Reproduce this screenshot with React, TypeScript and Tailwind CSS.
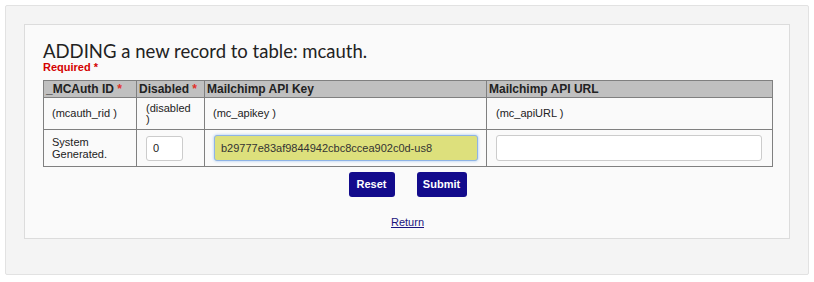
import React, { useState } from 'react'

const sans = { fontFamily: '"Liberation Sans", Arial, sans-serif' }

const Req: React.FC = () => <span className="text-[#e0302a]"> *</span>

export const App: React.FC = () => {
  const [disabled, setDisabled] = useState('0')
  const [apiKey, setApiKey] = useState('b29777e83af9844942cbc8ccea902c0d-us8')
  const [apiUrl, setApiUrl] = useState('')

  return (
    <div className="w-[814px] h-[282px] bg-white p-[5px]" style={sans}>
      <div className="w-[804px] h-[270px] border border-[#e2e2e2] bg-[#f4f4f4] rounded-[2px] p-[18px]">
        <div className="w-[766px] h-[215px] border border-[#dcdcdc] bg-[#fafafa] px-[18px] pt-[16px]">
          {/* Heading */}
          <h1
            className="text-[18.5px] leading-[20px] text-[#222] font-normal"
            style={{ fontFamily: 'Lato, "Open Sans", sans-serif' }}
          >
            ADDING a new record to table: mcauth.
          </h1>
          <div className="text-[11px] leading-[13px] font-bold text-[#d40000]">Required *</div>

          {/* Record table */}
          <table className="mt-[6px] w-[729px] border-collapse border border-[#808080] text-[11px] text-[#222] table-fixed">
            <colgroup>
              <col className="w-[93px]" />
              <col className="w-[68px]" />
              <col className="w-[282px]" />
              <col className="w-[286px]" />
            </colgroup>
            <thead>
              <tr className="h-[17px] bg-[#c0c0c0]">
                <th className="border border-[#808080] text-left font-bold text-[12px] leading-[14px] px-[2px] py-0">
                  _MCAuth ID<Req />
                </th>
                <th className="border border-[#808080] text-left font-bold text-[12px] leading-[14px] px-[2px] py-0">
                  Disabled<Req />
                </th>
                <th className="border border-[#808080] text-left font-bold text-[12px] leading-[14px] px-[2px] py-0">
                  Mailchimp API Key
                </th>
                <th className="border border-[#808080] text-left font-bold text-[12px] leading-[14px] px-[2px] py-0">
                  Mailchimp API URL
                </th>
              </tr>
            </thead>
            <tbody>
              <tr className="h-[32px]">
                <td className="border border-[#808080] px-[8px] align-middle leading-[11px]">(mcauth_rid )</td>
                <td className="border border-[#808080] px-[9px] align-middle leading-[11px]">(disabled )</td>
                <td className="border border-[#808080] px-[8px] align-middle leading-[11px]">(mc_apikey )</td>
                <td className="border border-[#808080] px-[9px] align-middle leading-[11px]">(mc_apiURL )</td>
              </tr>
              <tr className="h-[37px]">
                <td className="border border-[#808080] px-[8px] align-middle leading-[12px]">
                  System
                  <br />
                  Generated.
                </td>
                <td className="border border-[#808080] px-[9px] align-middle">
                  <input
                    value={disabled}
                    onChange={(e) => setDisabled(e.target.value)}
                    className="w-[37px] h-[25px] border border-[#cccccc] rounded-[3px] bg-white px-[6px] text-[11px] text-[#222] outline-none"
                    style={sans}
                  />
                </td>
                <td className="border border-[#808080] px-[9px] align-middle">
                  <input
                    value={apiKey}
                    onChange={(e) => setApiKey(e.target.value)}
                    className="w-[264px] h-[26px] border border-[#8fb4e6] rounded-[3px] bg-[#dde07c] px-[6px] text-[11px] text-[#333] outline-none shadow-[0_0_3px_#9ec3f0]"
                    style={sans}
                  />
                </td>
                <td className="border border-[#808080] px-[9px] align-middle">
                  <input
                    value={apiUrl}
                    onChange={(e) => setApiUrl(e.target.value)}
                    className="w-[266px] h-[26px] border border-[#cccccc] rounded-[3px] bg-white px-[6px] text-[11px] text-[#222] outline-none"
                    style={sans}
                  />
                </td>
              </tr>
            </tbody>
          </table>

          {/* Actions */}
          <div className="w-[729px] flex justify-center gap-[22px] mt-[5px]">
            <button
              type="button"
              className="w-[46px] h-[25px] rounded-[3px] bg-[#130b8c] text-white font-bold text-[11px]"
            >
              Reset
            </button>
            <button
              type="button"
              className="w-[50px] h-[25px] rounded-[3px] bg-[#130b8c] text-white font-bold text-[11px]"
            >
              Submit
            </button>
          </div>
          <div className="w-[729px] text-center mt-[19px] text-[11px] leading-[13px]">
            <a href="#" className="underline text-[#1a1480]">Return</a>
          </div>
        </div>
      </div>
    </div>
  )
}

export default App
